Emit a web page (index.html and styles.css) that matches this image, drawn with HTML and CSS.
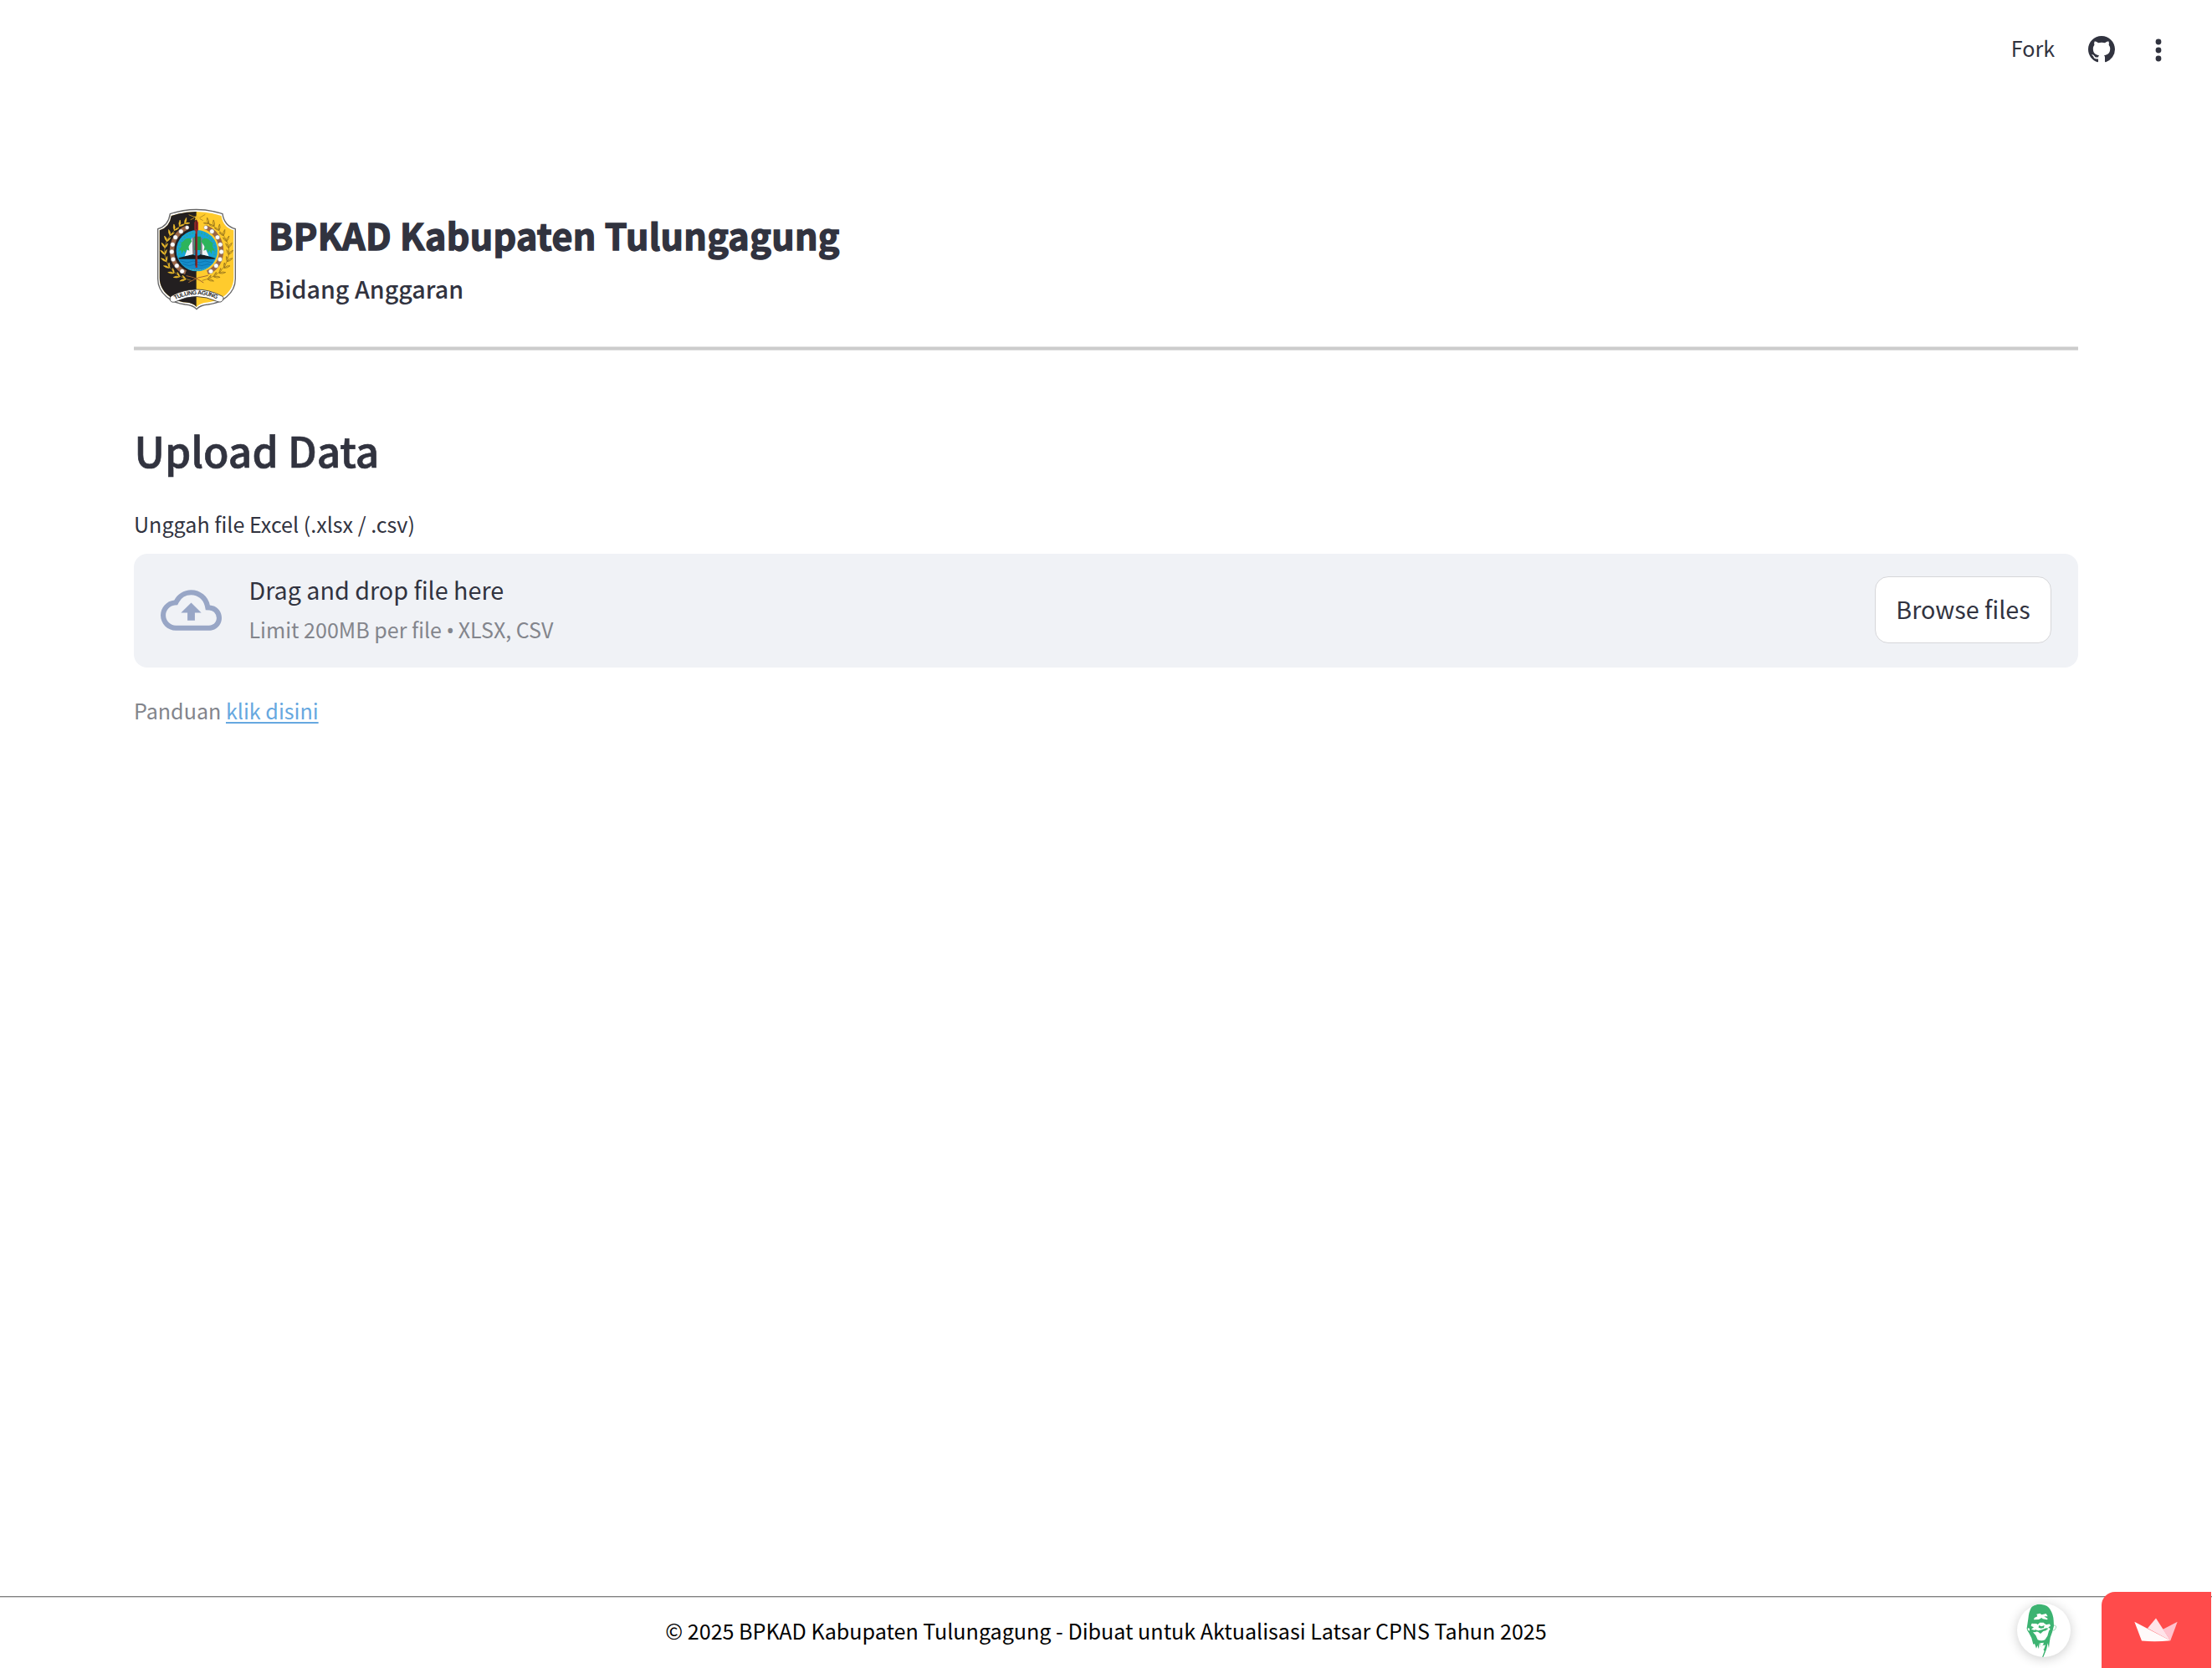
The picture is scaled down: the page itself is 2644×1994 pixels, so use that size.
FILE: index.html
```html
<!DOCTYPE html>
<html lang="id">
<head>
<meta charset="utf-8">
<title>BPKAD Kabupaten Tulungagung</title>
<link rel="stylesheet" href="styles.css">
</head>
<body>
<div class="app">
  <header class="toolbar">
    <a class="fork">Fork</a>
    <svg class="github" viewBox="0 0 16 16"><path fill="currentColor" d="M8 0C3.58 0 0 3.58 0 8c0 3.54 2.29 6.53 5.47 7.59.4.07.55-.17.55-.38 0-.19-.01-.82-.01-1.49-2.01.37-2.53-.49-2.69-.94-.09-.23-.48-.94-.82-1.13-.28-.15-.68-.52-.01-.53.63-.01 1.08.58 1.23.82.72 1.21 1.87.87 2.33.66.07-.52.28-.87.51-1.07-1.78-.2-3.64-.89-3.64-3.95 0-.87.31-1.59.82-2.15-.08-.2-.36-1.02.08-2.12 0 0 .67-.21 2.2.82.64-.18 1.32-.27 2-.27s1.36.09 2 .27c1.53-1.04 2.2-.82 2.2-.82.44 1.1.16 1.92.08 2.12.51.56.82 1.27.82 2.15 0 3.07-1.87 3.75-3.65 3.95.29.25.54.73.54 1.48 0 1.07-.01 1.93-.01 2.2 0 .21.15.46.55.38A8.01 8.01 0 0 0 16 8c0-4.42-3.58-8-8-8z"/></svg>
    <svg class="dots" viewBox="0 0 8 28"><g fill="currentColor"><circle cx="4" cy="4" r="3.4"/><circle cx="4" cy="14" r="3.4"/><circle cx="4" cy="24" r="3.4"/></g></svg>
  </header>

  <main class="content">
    <section class="brand">
      <svg class="crest" viewBox="80 54 294 372">
        <defs>
          <path id="shield" d="M132 77Q226 46 320 77Q326 120 366 131V310C366 364 316 397 268 402Q240 404 227 419Q214 404 186 402C138 397 88 364 88 310V131Q126 120 132 77Z"/>
          <clipPath id="leftHalf"><rect x="80" y="50" width="146" height="380"/></clipPath>
          <clipPath id="disc"><circle cx="228" cy="209" r="71"/></clipPath>
          <path id="motto" d="M150 385Q227 348 306 385"/>
          <g id="leaf"><path d="M0 0Q-10-5-13-18Q-2-14 0 0Z"/><path d="M0 0Q8-5 10-16Q1-12 0 0Z"/></g>
          <g id="wreath">
            <path d="M190 108C135 135 104 180 114 228C122 278 165 306 208 316" fill="none"/>
            <use href="#leaf" transform="translate(184 112) rotate(52)"/>
            <use href="#leaf" transform="translate(165 121) rotate(42)"/>
            <use href="#leaf" transform="translate(147 136) rotate(32)"/>
            <use href="#leaf" transform="translate(132 155) rotate(22)"/>
            <use href="#leaf" transform="translate(121 176) rotate(10)"/>
            <use href="#leaf" transform="translate(114 199) rotate(0)"/>
            <use href="#leaf" transform="translate(113 223) rotate(-10)"/>
            <use href="#leaf" transform="translate(118 248) rotate(-22)"/>
            <use href="#leaf" transform="translate(129 271) rotate(-34)"/>
            <use href="#leaf" transform="translate(146 290) rotate(-46)"/>
            <use href="#leaf" transform="translate(166 303) rotate(-58)"/>
            <use href="#leaf" transform="translate(188 312) rotate(-70)"/>
          </g>
        </defs>
        <use href="#shield" fill="#fff" stroke="#666" stroke-width="4"/>
        <g transform="translate(227 235) scale(.955) translate(-227 -235)">
          <use href="#shield" fill="#ffcb2d"/>
          <use href="#shield" fill="#231f20" clip-path="url(#leftHalf)"/>
        </g>
        <use href="#wreath" fill="#efbd2c" stroke="#efbd2c" stroke-width="1.5"/>
        <use href="#wreath" transform="matrix(-1 0 0 1 455 0)" fill="#f4c12b" stroke="#8a6a1b" stroke-width="2"/>
        <path d="M198 323Q230 302 268 298M252 324Q225 305 190 299" fill="none" stroke="#a5682f" stroke-width="3"/>
        <path d="M194 125C121 155 121 262 188 287M260 125C333 155 333 262 266 287" fill="none" stroke="#9b6646" stroke-width="16"/>
        <g fill="#fff" stroke="#666" stroke-width="1">
          <circle cx="193" cy="126" r="7"/><circle cx="171" cy="140" r="8"/><circle cx="151" cy="161" r="8"/><circle cx="141" cy="187" r="8"/><circle cx="138" cy="213" r="8"/><circle cx="143" cy="240" r="8"/><circle cx="156" cy="263" r="8"/><circle cx="175" cy="283" r="8"/>
          <circle cx="260" cy="126" r="7"/><circle cx="282" cy="140" r="8"/><circle cx="302" cy="161" r="8"/><circle cx="312" cy="187" r="8"/><circle cx="316" cy="213" r="8"/><circle cx="311" cy="240" r="8"/><circle cx="297" cy="263" r="8"/><circle cx="278" cy="283" r="8"/>
        </g>
        <circle cx="228" cy="209" r="76" fill="#231f20" clip-path="url(#leftHalf)"/>
        <path d="M228 133A76 76 0 0 1 228 285Z" fill="#ffcb2d"/>
        <circle cx="228" cy="209" r="74" fill="#16a5d8"/>
        <g clip-path="url(#disc)">
          <circle cx="228" cy="209" r="65" fill="none" stroke="#28a8a0" stroke-width="7" stroke-dasharray="6 5"/>
          <path d="M150 238H306V290H150Z" fill="#168cc9"/>
          <path d="M160 249q11-6 22 0t22 0t22 0t22 0t22 0t22 0M168 260q11-6 22 0t22 0t22 0t22 0t22 0" fill="none" stroke="#086ba8" stroke-width="2"/>
          <path d="M164 252Q185 278 228 280Q270 278 292 252" fill="none" stroke="#d4c84c" stroke-width="4" stroke-dasharray="5 3"/>
          <path d="M150 239Q188 228 213 222Q228 232 242 222Q267 228 306 239Z" fill="#171b20"/>
          <path d="M211 162L184 229L215 222L224 164ZM241 162L271 229L242 222L232 164Z" fill="#f2f3f5"/>
          <path d="M211 162L213 222H220V162ZM241 162L239 222H247V162Z" fill="#737982"/>
          <path d="M219 158H242V207H219Z" fill="#17984c"/>
        </g>
        <path d="M203 164Q186 163 180 175Q168 180 172 193L163 209L172 208L173 222L181 207L187 218L190 204L201 209L198 194L210 175ZM253 164Q270 163 276 175Q288 180 284 193L292 209L282 208L281 222L273 207L268 218L264 204L252 209L256 194L243 175Z" fill="#2db45b"/>
        <path d="M226 96L233 108V134L230 140V270H223V140L219 134V108Z" fill="#9d2929"/>
        <path d="M226 99V133M224 148V263" stroke="#401d1d" stroke-width="3"/>
        <path d="M228 78L231 86H240L233 92L236 101L228 96L220 101L223 92L216 86H225Z" fill="#efbd2c"/>
        <path d="M199 80L218 88M205 98L218 92M238 91L258 79M238 94L250 101" stroke="#b98d25" stroke-width="3"/>
        <path d="M137 371Q225 325 316 371Q327 375 321 387Q315 397 300 391Q226 356 154 391Q138 398 132 387Q129 376 137 371Z" fill="#fff" stroke="#333" stroke-width="2.5"/>
        <text class="motto"><textPath href="#motto" textLength="155">TULUNG AGUNG</textPath></text>
      </svg>
      <div class="brand-text">
        <h1>BPKAD Kabupaten Tulungagung</h1>
        <p>Bidang Anggaran</p>
      </div>
    </section>

    <h2>Upload Data</h2>
    <label class="field-label">Unggah file Excel (.xlsx / .csv)</label>
    <section class="dropzone">
      <svg class="cloud" viewBox="0 4 24 16"><path fill="currentColor" d="M19.35 10.04A7.49 7.49 0 0 0 12 4C9.11 4 6.6 5.64 5.35 8.04A5.994 5.994 0 0 0 0 14c0 3.31 2.69 6 6 6h13c2.76 0 5-2.24 5-5 0-2.64-2.05-4.78-4.65-4.96zM19 18H6c-2.21 0-4-1.79-4-4 0-2.05 1.53-3.76 3.56-3.97l1.07-.11.5-.95A5.469 5.469 0 0 1 12 6c2.62 0 4.88 1.86 5.39 4.43l.3 1.5 1.53.11A2.98 2.98 0 0 1 22 15c0 1.65-1.35 3-3 3zM8 13h2.55v3h2.9v-3H16l-4-4z"/></svg>
      <div class="instructions">
        <span class="drag">Drag and drop file here</span>
        <span class="limit">Limit 200MB per file <span class="bullet">•</span> XLSX, CSV</span>
      </div>
      <button class="browse"><span>Browse files</span></button>
    </section>
    <p class="guide">Panduan <a>klik disini</a></p>
  </main>

  <footer class="footer"><span>© 2025 BPKAD Kabupaten Tulungagung - Dibuat untuk Aktualisasi Latsar CPNS Tahun 2025</span></footer>

  <div class="badges">
    <div class="avatar">
      <svg viewBox="0 0 192 192">
        <path fill="#3cb371" d="M51 14Q62 0 87 3Q112 6 119 22Q130 39 131 61L132 80Q127 102 119 122Q116 138 114 160L110 142L106 162L99 180L94 192H90L98 170L93 162L96 146L88 158L80 142L78 163L73 150L69 161L63 144L58 146L52 124L42 104Q32 94 36 82L40 55Q42 29 51 14Z"/>
        <path fill="#fff" d="M70 38L82 35L88 40L104 36L110 46H97L110 54L108 58L92 55L88 51L78 57L60 58L62 51L73 46ZM52 72L66 70L74 75L82 68H96L104 76L117 73L120 80L112 85L119 91L114 98L109 116L100 130Q88 136 74 130L67 114L57 103L70 102L62 95L51 92L60 85L50 80Z"/>
        <path fill="#3cb371" d="M78 78L88 82L98 78L96 87L86 89L77 86ZM64 93L76 97L89 94L104 88L113 89L103 97L94 99L84 108L75 101L63 99ZM57 66H80L74 72L57 71ZM94 66L118 68L116 73L98 71Z"/>
        <path fill="#fff" d="M82 142L96 140L91 152L102 148L96 165L86 156ZM39 87L45 90L44 99L38 94Z"/>
        <path fill="none" stroke="#3cb371" stroke-width="1.5" d="M132 78Q143 78 139 88Q135 99 127 96"/>
      </svg>
    </div>
    <div class="hosted">
      <svg viewBox="0 0 156 86"><path fill="#ffc2cd" d="M103 41L155 14L130 81Z"/><path fill="#ffe3e9" d="M78 1L130 81L48 37Z"/><path fill="#fffafa" d="M1 14L130 81Q76 87 27 82Z"/></svg>
    </div>
  </div>
</div>
</body>
</html>
```

FILE: styles.css
```css
* { box-sizing: border-box; }
body {
  margin: 0;
  background: #fff;
  color: #31333f;
  font-family: "Noto Sans CJK SC", "Noto Sans", sans-serif;
}
h1, h2, p { margin: 0; white-space: nowrap; }
.app { position: relative; height: 1994px; display: flex; flex-direction: column; overflow: hidden; }

.toolbar { height: 120px; display: flex; justify-content: flex-end; align-items: center; padding-right: 60px; }
.fork { font-size: 25.1px; line-height: 40px; margin: -6px 40px 0 0; }
.github { width: 32px; height: 32px; margin: -2px 48px 0 0; }
.dots { width: 8px; height: 28px; }

.content { flex: 1; padding: 0 160px; display: flex; flex-direction: column; }
.brand { height: 298px; padding: 128px 0 0 26px; display: flex; align-items: flex-start; border-bottom: 3px solid #ccc; box-shadow: 0 1px #dcdcdc, inset 0 -1px #e4e4e4; }
.crest { width: 98px; height: 124px; }
.motto { font: bold 21px "Liberation Sans", sans-serif; fill: #222; }
.brand-text { padding: 2px 0 0 37px; }
.brand h1 { font-size: 43px; line-height: 60px; font-weight: 700; letter-spacing: .35px; -webkit-text-stroke: 1.4px currentColor; }
.brand p { font-size: 28.7px; line-height: 40px; font-weight: 500; margin-top: 15px; }

h2 { font-size: 49.7px; line-height: 80px; font-weight: 500; margin: 79px 0 0 .5px; -webkit-text-stroke: .7px currentColor; }
.field-label { font-size: 25.1px; line-height: 40px; margin-top: 29px; }
.dropzone { height: 136px; margin-top: 15.5px; padding: 0 32px; display: flex; align-items: center; background: #f0f2f6; border-radius: 16px; }
.cloud { width: 73px; height: 49px; margin-top: -1px; color: #98a6c6; }
.instructions { display: flex; flex-direction: column; flex: 1; margin: -4px 0 0 32.5px; }
.drag { font-size: 28.7px; line-height: 48px; }
.limit { font-size: 25.05px; line-height: 46px; color: #83858c; }
.bullet { font-family: "Noto Sans", sans-serif; margin-right: -1px; line-height: 1; }
.browse { width: 211px; height: 80px; margin-top: -1px; padding: 0 0 2px; border: 1px solid #d6d6d9; border-radius: 16px; background: #fff; color: inherit; font: 28.7px/40px "Noto Sans CJK SC", sans-serif; }
.guide { font-size: 25.1px; line-height: 40px; margin-top: 31.5px; color: #83858c; }
.guide a { color: #66a8e0; text-decoration: underline; text-decoration-thickness: 2px; text-underline-offset: 3px; }

.footer { height: 86px; border-top: 1px solid #808080; box-shadow: inset 0 1px #d0d0d0; padding-top: 20px; text-align: center; color: #000; font-size: 25.08px; line-height: 40px; }

.badges { position: absolute; right: 1px; bottom: 0; display: flex; align-items: flex-end; }
.avatar { width: 64px; height: 64px; margin: 0 37px 13px 0; border-radius: 50%; overflow: hidden; background: #fff; box-shadow: 0 2px 14px rgba(0, 0, 0, .2); }
.avatar svg { display: block; width: 64px; height: 64px; }
.hosted { width: 131px; height: 91px; padding: 31px 0 0 39px; background: #ff4b4b; border-radius: 16px 0 0 0; }
.hosted svg { display: block; width: 52px; height: 29px; }
```
